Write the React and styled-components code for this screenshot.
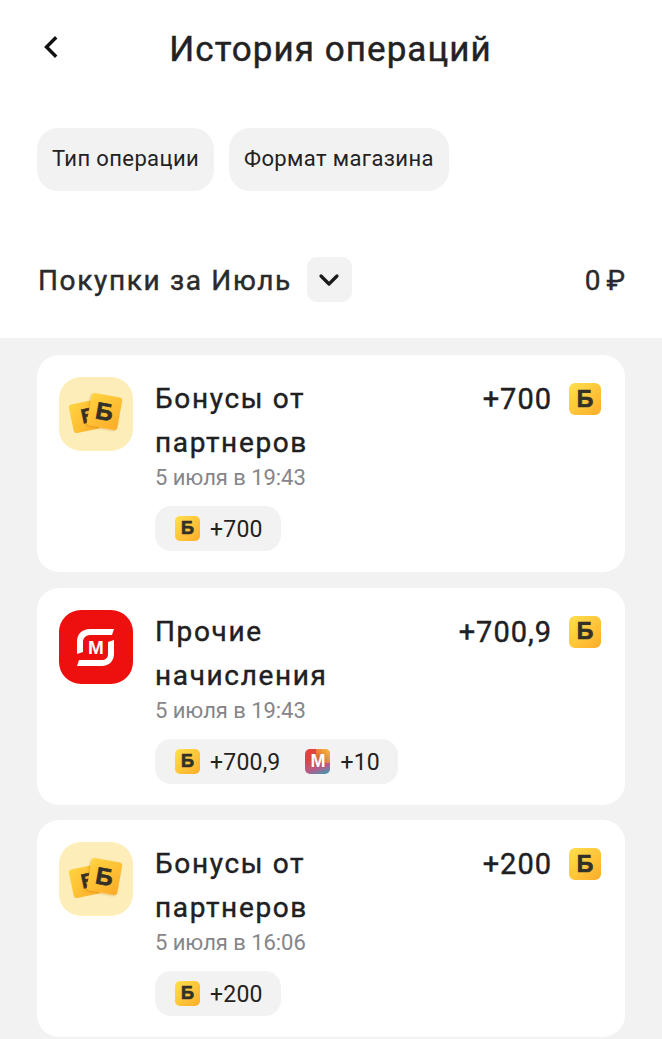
import React from "react";
import styled, { createGlobalStyle } from "styled-components";

const Global = createGlobalStyle`
  html, body { margin: 0; padding: 0; background: #fff; }
  body { font-family: Roboto, "Noto Sans", sans-serif; color: #1c1c1e; width: 662px; height: 1039px; overflow: hidden; }
  * { box-sizing: border-box; }
`;

const Page = styled.div`
  width: 662px;
  height: 1039px;
  overflow: hidden;
  display: flex;
  flex-direction: column;
`;
const Top = styled.header`
  background: #fff;
  height: 338px;
  flex: none;
  display: flex;
  flex-direction: column;
  padding: 0 37px;
`;
const Header = styled.div`
  position: relative;
  height: 98px;
  flex: none;
  display: flex;
  align-items: center;
  justify-content: center;
`;
const Back = styled.svg`
  position: absolute;
  left: 5px;
  top: 36px;
  width: 16px;
  height: 22px;
`;
const Title = styled.h1`
  margin: 1px 0 0 -1px;
  font-size: 35px;
  font-weight: 400;
  -webkit-text-stroke: 0.45px #222224;
  line-height: 40px;
  letter-spacing: 1.05px;
  color: #222224;
`;
const Chips = styled.div`
  display: flex;
  gap: 15px;
  margin-top: 30px;
`;
const Chip = styled.div`
  height: 63px;
  padding: 0 15px 2px;
  border-radius: 21px;
  background: #f2f2f2;
  display: flex;
  align-items: center;
  font-size: 22px;
  letter-spacing: 0.38px;
  color: #222;
`;
const Month = styled.div`
  display: flex;
  align-items: center;
  margin-top: 66px;
  height: 45px;
`;
const MonthLabel = styled.div`
  font-size: 28px;
  font-weight: 400;
  -webkit-text-stroke: 0.45px #2a2a2c;
  letter-spacing: 1.65px;
  color: #2a2a2c;
  margin: 2px 0 0 1px;
`;
const Caret = styled.div`
  width: 45px;
  height: 45px;
  margin-left: 15px;
  border-radius: 10px;
  background: #f2f2f2;
  display: flex;
  align-items: center;
  justify-content: center;
`;
const Total = styled.div`
  margin: 2px 0 0 auto;
  font-size: 28px;
  font-weight: 400;
  -webkit-text-stroke: 0.35px #2a2a2c;
  color: #2a2a2c;
  display: flex;
  gap: 6px;
`;
const List = styled.main`
  flex: 1;
  background: #f2f2f2;
  padding: 17px 37px 0;
  display: flex;
  flex-direction: column;
  gap: 15.5px;
`;
const Card = styled.article`
  flex: none;
  height: 217px;
  border-radius: 22px;
  background: #fff;
  padding: 22px 24px 0 22px;
  display: grid;
  grid-template-columns: 74px 1fr auto;
  column-gap: 22px;
  align-items: start;
`;
const Logo = styled.div`
  width: 74px;
  height: 74px;
  border-radius: 22px;
  background: ${(p) => (p.$red ? "#ee0f0f" : "#fdeeb9")};
  display: flex;
  align-items: center;
  justify-content: center;
  position: relative;
`;
const Ticket = styled.div`
  position: absolute;
  border-radius: 3px;
  background: linear-gradient(135deg, #ffd440, #fdab28);
  display: flex;
  align-items: center;
  justify-content: center;
  font-family: "Liberation Sans", sans-serif;
  font-weight: 700;
  color: #33302a;
  -webkit-text-stroke: 0.7px #33302a;
  width: ${(p) => (p.$front ? "31px" : "28px")};
  height: ${(p) => (p.$front ? "33px" : "29px")};
  left: ${(p) => (p.$front ? "30px" : "12px")};
  top: ${(p) => (p.$front ? "18px" : "25px")};
  font-size: ${(p) => (p.$front ? "24px" : "20px")};
  padding-left: ${(p) => (p.$front ? "0" : "7px")};
  transform: rotate(${(p) => (p.$front ? "10deg" : "-12deg")});
  box-shadow: ${(p) => (p.$front ? "-1px 1px 2px rgba(180,110,0,.35)" : "none")};
  overflow: hidden;
`;
const MagnitText = styled.span`
  position: absolute;
  left: 0;
  right: 0;
  top: 27px;
  text-align: center;
  font-family: "Liberation Sans", sans-serif;
  font-size: 19px;
  line-height: 22px;
  font-weight: 700;
  color: #fff;
`;
const Body = styled.div`
  min-width: 0;
  display: flex;
  flex-direction: column;
  align-items: flex-start;
`;
const Name = styled.div`
  font-size: 28px;
  font-weight: 400;
  -webkit-text-stroke: 0.4px #202022;
  line-height: 44px;
  letter-spacing: 1.65px;
  width: 205px;
  color: #202022;
`;
const When = styled.div`
  font-size: 22px;
  line-height: 26px;
  color: #85858a;
  letter-spacing: -0.05px;
`;
const Pill = styled.div`
  margin-top: 15px;
  height: 45px;
  padding: 0 18px 0 20px;
  border-radius: 16px;
  background: #f2f2f2;
  display: flex;
  align-items: center;
  gap: 25px;
`;
const PillItem = styled.div`
  display: flex;
  align-items: center;
  gap: 10px;
  font-size: 23px;
  letter-spacing: 0.2px;
  color: #222;
  & > span:last-child {
    padding-top: 2px;
  }
`;
const Amount = styled.div`
  display: flex;
  align-items: center;
  gap: 17px;
  height: 44px;
  font-size: 29px;
  font-weight: 400;
  -webkit-text-stroke: 0.4px #202022;
  letter-spacing: 1px;
  color: #202022;
`;
const Coin = styled.span`
  flex: none;
  width: ${(p) => p.$s}px;
  height: ${(p) => p.$s}px;
  border-radius: ${(p) => Math.round(p.$s / 5.5)}px;
  background: linear-gradient(135deg, #ffdb4a 10%, #fdaf2c 95%);
  display: inline-flex;
  align-items: center;
  justify-content: center;
  font-family: "Liberation Sans", sans-serif;
  font-weight: 700;
  letter-spacing: 0;
  -webkit-text-stroke: 0.7px #33302a;
  font-size: ${(p) => Math.round(p.$s * 0.72)}px;
  color: #33302a;
`;
const MCoin = styled.span`
  flex: none;
  width: 25px;
  height: 25px;
  border-radius: 5px;
  background: linear-gradient(160deg, #e8423c 0%, #d7473f 35%, #b95a8c 70%, #2aa3b5 100%);
  position: relative;
  display: inline-flex;
  align-items: center;
  justify-content: center;
  font-family: "Liberation Sans", sans-serif;
  font-weight: 700;
  font-size: 18px;
  color: #fff;
  overflow: hidden;
  &::after {
    content: "";
    position: absolute;
    top: 0;
    right: 0;
    width: 14px;
    height: 14px;
    background: linear-gradient(225deg, #f9c534, rgba(249, 197, 52, 0));
  }
`;
const MLetter = styled.i`
  position: relative;
  z-index: 1;
  font-style: normal;
`;

const Partner = () => (
  <Logo>
    <Ticket>Б</Ticket>
    <Ticket $front>Б</Ticket>
  </Logo>
);
const Magnit = () => (
  <Logo $red>
    <svg width="74" height="74" viewBox="0 0 74 74" fill="none" aria-hidden="true">
      <path d="M55 19H31C23 19 18 24 18 32V44L24 42V32C24 28 27 25 31 25H53Z" fill="#fff" />
      <path d="M18 56H43C50 56 55 51 55 44V30L49 32V44C49 48 46 50 43 50H20Z" fill="#fff" />
    </svg>
    <MagnitText>М</MagnitText>
  </Logo>
);

const rows = [
  { logo: <Partner />, name: "Бонусы от партнеров", amount: "+700", when: "5 июля в 19:43", bonus: "+700" },
  { logo: <Magnit />, name: "Прочие начисления", amount: "+700,9", when: "5 июля в 19:43", bonus: "+700,9", extra: "+10" },
  { logo: <Partner />, name: "Бонусы от партнеров", amount: "+200", when: "5 июля в 16:06", bonus: "+200" },
];

export default function App() {
  return (
    <Page>
      <Global />
      <Top>
        <Header>
          <Back viewBox="0 0 16 22" fill="none" aria-hidden="true">
            <path d="M13 2.5 4.5 11l8.5 8.5" stroke="#111" strokeWidth="3.4" strokeLinecap="square" />
          </Back>
          <Title>История операций</Title>
        </Header>
        <Chips>
          <Chip>Тип операции</Chip>
          <Chip>Формат магазина</Chip>
        </Chips>
        <Month>
          <MonthLabel>Покупки за Июль</MonthLabel>
          <Caret>
            <svg width="22" height="14" viewBox="0 0 22 14" fill="none" aria-hidden="true">
              <path d="M3 3l8 8 8-8" stroke="#1a1a1a" strokeWidth="3.2" strokeLinecap="round" strokeLinejoin="round" />
            </svg>
          </Caret>
          <Total><span>0</span><span>₽</span></Total>
        </Month>
      </Top>
      <List>
        {rows.map((r, i) => (
          <Card key={i}>
            {r.logo}
            <Body>
              <Name>{r.name}</Name>
              <When>{r.when}</When>
              <Pill>
                <PillItem>
                  <Coin $s={25}>Б</Coin>
                  <span>{r.bonus}</span>
                </PillItem>
                {r.extra && (
                  <PillItem>
                    <MCoin><MLetter>М</MLetter></MCoin>
                    <span>{r.extra}</span>
                  </PillItem>
                )}
              </Pill>
            </Body>
            <Amount>
              {r.amount}
              <Coin $s={32}>Б</Coin>
            </Amount>
          </Card>
        ))}
      </List>
    </Page>
  );
}
